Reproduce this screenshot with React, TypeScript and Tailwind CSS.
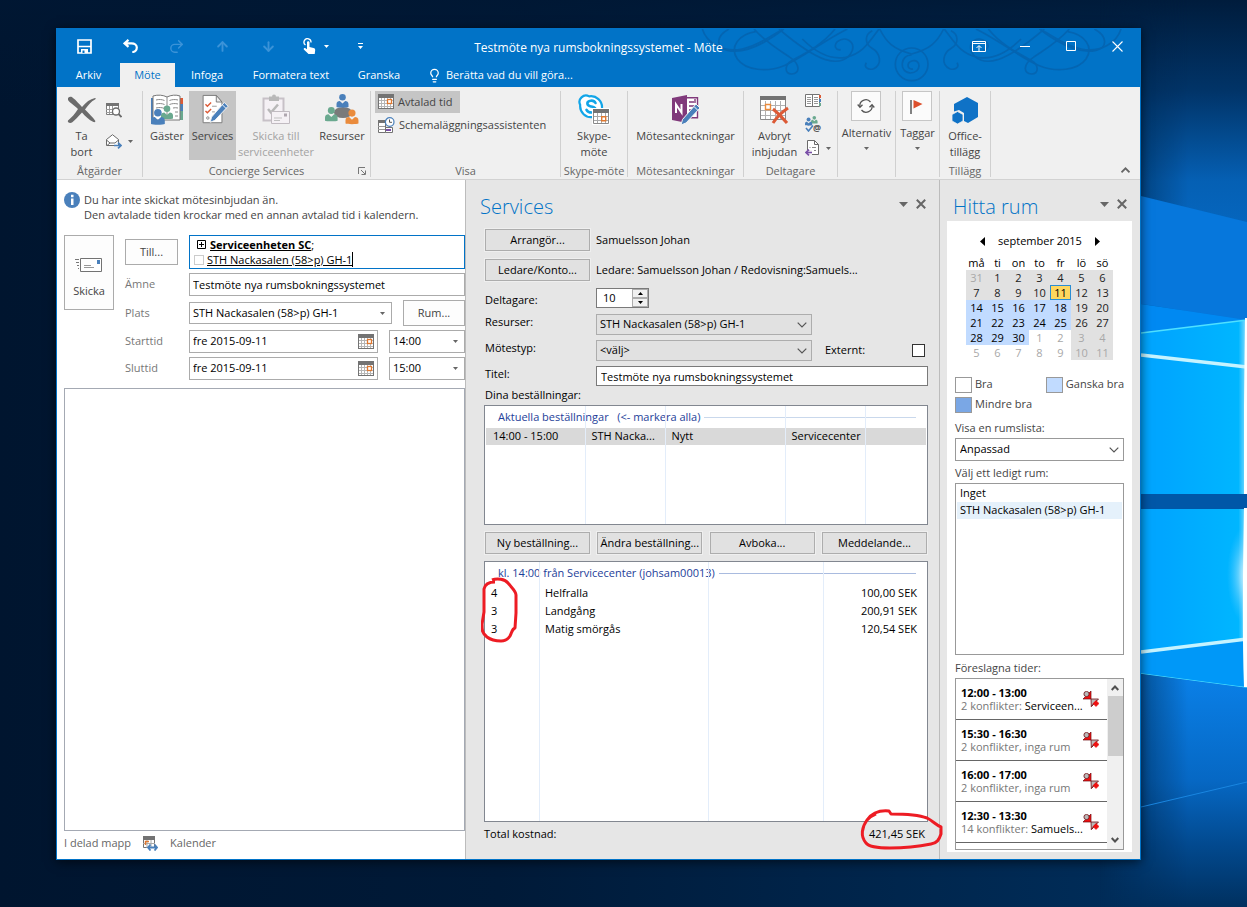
import type { ReactNode } from "react";
import { Redo2, ArrowUp, ArrowDown, Lightbulb } from "lucide-react";

/* ---------- shared glyphs ---------- */

const Caret = ({ className = "text-[#666]" }: { className?: string }) => (
  <svg className={className} width="5" height="3" viewBox="0 0 5 3" fill="currentColor">
    <path d="M0 0h5L2.5 3z" />
  </svg>
);

const Chevron = () => (
  <svg width="10" height="6" viewBox="0 0 10 6" fill="none" stroke="#555" strokeWidth="1.2">
    <path d="M.7.7 5 5 9.3.7" />
  </svg>
);

const SmallCalendar = ({ size = 16 }: { size?: number }) => (
  <svg width={size} height={size} viewBox="0 0 16 16">
    <rect x=".5" y=".5" width="15" height="14" fill="#fff" stroke="#737373" />
    <path d="M3.5 4v10M6.5 4v10M9.5 4v10M12.5 4v10M1 6.5h14M1 9.5h14M1 12.5h14" stroke="#b5b5b5" />
    <path d="M0 0h16v4H0z" fill="#737373" />
    <rect x="9.5" y="5.5" width="4" height="4" fill="#fff" stroke="#e0782f" strokeWidth="1.3" />
  </svg>
);

const Person = ({ x, y, color, s = 1 }: { x: number; y: number; color: string; s?: number }) => (
  <g transform={`translate(${x} ${y}) scale(${s})`} fill={color}>
    <circle cx="6" cy="3.3" r="3.3" />
    <path d="M0 13V10c0-2 1.500-3 3.300-3L6 9.500 8.700 7c1.800 0 3.300 1 3.300 3v3c-1 .8-11 .8-12 0z" />
  </g>
);

const Pencil = ({ color = "#4a80bb" }: { color?: string }) => (
  <g>
    <path d="m29 6 4 4-14 15-5 2 1.500-5.500z" fill={color} stroke="#f5f5f5" strokeWidth="1" />
    <path d="m27 8.500 4 4" stroke="#fff" strokeWidth="1" />
  </g>
);

/* ---------- ribbon icons ---------- */

const DeleteIcon = () => (
  <svg width="30" height="28" viewBox="0 0 30 28">
    <path
      d="M1 2c2-2 4-1 5 0 3 2 6 6 9 9C19 6 23 3 28 2c1 0 1 1 0 1.500-4 2-7 6-10 10 4 4 8 8 10 11 1 1 0 2-1.500 1.500C22 24 18 20 15 16.500 11 21 8 24 5 26.500c-2 1-5 0-4-2C4 22 8 18 11 13 7 9 2 6 1 4z"
      fill="#6b6b6b"
    />
  </svg>
);

const CalendarSearchIcon = () => (
  <svg width="16" height="15" viewBox="0 0 16 15">
    <path d="M.5 1.500h12v10H.5z" fill="#fff" stroke="#7d7d7d" />
    <path d="M3.500 3v8M6.500 3v8M0 6.500h12M0 9.500h9" stroke="#9a9a9a" />
    <path d="M0 0h13v3H0z" fill="#737373" />
    <circle cx="10" cy="8.500" r="3.500" fill="#fff" stroke="#6b6b6b" strokeWidth="1.300" />
    <path d="m12.500 11 3 3" stroke="#6b6b6b" strokeWidth="1.800" />
  </svg>
);

const ForwardMailIcon = () => (
  <svg width="16" height="15" viewBox="0 0 16 15" fill="none">
    <path d="M.5 5.500 6.500.7l6 4.800v6H.5z" fill="#fff" stroke="#6b6b6b" />
    <path d="m.5 6 3.500 3h5l3.500-3M1 11.500l3-2.500" stroke="#6b6b6b" />
    <path d="M8 11.500h6M12 8.700l3 2.800-3 2.800" stroke="#4a80bb" strokeWidth="1.700" />
  </svg>
);

const GuestsIcon = () => (
  <svg width="32" height="32" viewBox="0 0 32 32">
    <path d="M0 4h32v22H0z" fill="#4a80bb" />
    <path d="M29 4h3v6h-3z" fill="#dc5a36" />
    <path d="M29 17h3v9h-3z" fill="#6aa98f" />
    <path d="M2 2c5-1.500 10-1 14 1 4-2 9-2.500 13-1v24H2z" fill="#fff" stroke="#777" />
    <path d="M16 3v22M5 6c3-.8 6-.6 8.500.5M5 10c3-.8 6-.6 8.500.5M5 14c3-.8 6-.6 8.500.5M18.500 6.500C21 5.500 24 5.200 27 6M18.500 10.500C21 9.500 24 9.200 27 10M22 14c2-.4 3-.4 5 0M24 18h3M24 22h3" fill="none" stroke="#8a8a8a" />
    <Person x={10} y={11.500} color="#6aa98f" />
    <Person x={0} y={15} color="#4a80bb" s={1.150} />
  </svg>
);

const ServicesIcon = () => (
  <svg width="32" height="32" viewBox="0 0 34 32">
    <path d="M6.500.5h14l6 7v22h-20z" fill="#fff" stroke="#777" />
    <path d="M20.500.5v7h6z" fill="#eee" stroke="#777" />
    <g fill="none" stroke="#dc5a36" strokeWidth="1.500">
      <path d="m9 10 2 2 4-4M9 17l2 2 4-4" />
    </g>
    <circle cx="11.500" cy="24.500" r="1.300" fill="none" stroke="#888" />
    <path d="M16 12h5M16 18h3" stroke="#999" />
    <g transform="translate(0 2)">
      <Pencil />
    </g>
  </svg>
);

const SendUnitsIcon = () => (
  <svg width="32" height="32" viewBox="0 0 32 32" opacity=".9">
    <path d="M3.500 4.500h20v22h-20z" fill="#f6f2f6" stroke="#c3bcc3" strokeWidth="2" />
    <path d="M9 2.500h3a2 2 0 0 1 4 0h3V7H9z" fill="#b3b3b3" />
    <path d="m8 15 3 3.500 7-8" fill="none" stroke="#b3b3b3" strokeWidth="2.500" />
    <path d="M11.500 17.500h18v12h-18z" fill="#f6f2f6" stroke="#bdb6bd" />
    <path d="M24 19.500h3v3h-3z" fill="#a8a0a8" />
    <path d="M14 24h8M14 26.500h6" stroke="#bbb" />
  </svg>
);

const ResourcesIcon = () => (
  <svg width="34" height="32" viewBox="0 0 34 32">
    <ellipse cx="18" cy="18.500" rx="9" ry="5.500" fill="#7a7a7a" />
    <Person x={11.500} y={0} color="#4a80bb" />
    <Person x={0} y={13} color="#6aa98f" s={1.050} />
    <Person x={20.500} y={15.500} color="#ea8b3c" s={1.080} />
  </svg>
);

const ScheduleIcon = () => (
  <svg width="17" height="17" viewBox="0 0 17 17">
    <path d="M.5 3.500h7v12h-7z" fill="#fff" stroke="#737373" />
    <path d="M0 3h7v3H0z" fill="#737373" />
    <path d="M0 9.500h7M0 12.500h7" stroke="#999" />
    <path d="M7.500 10.500h7v5h-7z" fill="#fff" stroke="#737373" />
    <path d="M8 12h5v2H8z" fill="#7a4fa8" />
    <circle cx="11.700" cy="5" r="4.300" fill="#fff" stroke="#4a80bb" strokeWidth="1.200" />
    <path d="M11.500 2.500V5.300H14" fill="none" stroke="#555" />
  </svg>
);

const SkypeIcon = () => (
  <svg width="32" height="32" viewBox="0 0 32 32">
    <path d="M2.200 11a6.500 6.500 0 0 1 9-8.600A11 11 0 0 1 24 14a6.500 6.500 0 0 1-9 9A11 11 0 0 1 2.200 11z" fill="#fff" stroke="#12a5e8" strokeWidth="2.200" />
    <path d="M17.500 9c-1-2-3-2.500-4.800-2.300-4.500.5-4.200 4.500-.5 5.500 3 .8 6 1 5.600 4-.5 3.200-7.500 3.200-9.300-.4" fill="none" stroke="#12a5e8" strokeWidth="2.600" strokeLinecap="round" />
    <path d="M14.500 14.500h17v16h-17z" fill="#fff" stroke="#fff" />
    <path d="M15.500 15.500h15v14h-15z" fill="#fff" stroke="#8a8a8a" />
    <path d="M19.500 19v10M23.500 19v10M27.500 19v10M16 22.500h14M16 26.500h14" stroke="#a9a9a9" />
    <path d="M15 15h16v4H15z" fill="#737373" />
    <path d="M23.700 22.700h4v4h-4z" fill="#fff" stroke="#e0782f" strokeWidth="1.400" />
  </svg>
);

const OneNoteIcon = () => (
  <svg width="30" height="32" viewBox="0 0 30 32">
    <path d="M14 3.700h12.500v20H14z" fill="#fff" stroke="#80397b" strokeWidth="1.400" />
    <path d="M18 8h5M18 12h5M18 16h5M24 5v4M24 11v4" stroke="#80397b" strokeWidth="1.400" />
    <path d="M1 4 16 1v28L1 26z" fill="#80397b" />
    <path d="M5 19v-8.500l5.500 8V10" fill="none" stroke="#fff" strokeWidth="2" />
    <g transform="translate(-4 4)">
      <Pencil />
    </g>
  </svg>
);

const CancelInviteIcon = () => (
  <svg width="30" height="30" viewBox="0 0 30 30">
    <path d="M.5 2.500h25v22H.5z" fill="#fff" stroke="#8a8a8a" />
    <path d="M5.500 6v18M10.500 6v18M15.500 6v18M20.500 6v18M1 10.500h24M1 15.500h24M1 20.500h24" stroke="#b0b0b0" />
    <path d="M0 1h26v4H0z" fill="#737373" />
    <path d="M5.500 9.500h5v5h-5z" fill="#fff" stroke="#ea8b3c" strokeWidth="1.400" />
    <path d="M13 14c5 4 9 8 14 14M28 13c-6 4-11 9-15 15" stroke="#dc5a36" strokeWidth="3" fill="none" />
  </svg>
);

const BookIcon = () => (
  <svg width="16" height="14" viewBox="0 0 16 14">
    <path d="M.5.5h14v12H.5z" fill="#fff" stroke="#737373" />
    <path d="M7.500 0v13" stroke="#777" />
    <path d="M2 3.500h4M2 5.500h4M2 7.500h4M2 9.500h4M9 3.500h4M9 5.500h4M9 7.500h4M9 9.500h4" stroke="#999" />
    <path d="M14 1h2v3h-2z" fill="#dc5a36" />
    <path d="M14 5h2v3h-2z" fill="#4a80bb" />
    <path d="M14 9h2v3h-2z" fill="#6aa98f" />
  </svg>
);

const CheckNamesIcon = () => (
  <svg width="17" height="16" viewBox="0 0 17 16">
    <Person x={6} y={0} color="#6aa98f" s={0.550} />
    <Person x={0} y={1.500} color="#4a80bb" s={0.600} />
    <path d="m1 12 2.500 3L8 9.500" fill="none" stroke="#4a80bb" strokeWidth="1.600" />
    <text x="8" y="14.500" className="font-['Open_Sans'] text-[9px] font-bold" fill="#555">@</text>
  </svg>
);

const ResponseIcon = () => (
  <svg width="15" height="16" viewBox="0 0 15 16" fill="none">
    <path d="M2.500.5h7l4 4v10h-11z" fill="#fff" stroke="#6b6b6b" />
    <path d="M9.500.5v4h4" stroke="#6b6b6b" />
    <path d="M7 7.500h4M9 10.500h2M4.500 7.500h1" stroke="#888" />
    <path d="M0 10h7v5H0z" fill="#f0f0f0" />
    <path d="M1 12.500h6M4 9.700l-3 2.800 3 2.800" stroke="#7a4fa8" strokeWidth="1.700" />
  </svg>
);

const RecurIcon = () => (
  <svg width="18" height="16" viewBox="0 0 18 16" fill="none" stroke="#555" strokeWidth="1.300">
    <path d="M3 9a6 6 0 0 1 10.500-5M15 7a6 6 0 0 1-10.500 5" />
    <path d="M.7 6.500 3 9.300l2.500-2.500M17.300 9.500 15 6.700l-2.500 2.500" />
  </svg>
);

const FlagIcon = () => (
  <svg width="14" height="15" viewBox="0 0 14 15">
    <path d="M1 1v14" stroke="#6b6b6b" strokeWidth="1.700" />
    <path d="M3.500 1 12.500 5l-9 4.500z" fill="#dc4f2c" />
  </svg>
);

const AddinIcon = () => (
  <svg width="28" height="28" viewBox="0 0 28 28" fill="#0f72c6">
    <path d="m16 1 11 6v14l-10 6-4-2v-8L8 14 3 15.500V8z" />
    <path d="m6.500 15.500 5.500 3V25l-5.500 3L1 25v-6.500z" stroke="#f0f0f0" strokeWidth=".8" />
  </svg>
);

const ConflictIcon = () => (
  <svg width="16" height="16" viewBox="0 0 16 16">
    <path d="M8 0v8H0l2.500-2.500z" fill="#ef1010" stroke="#6f0d12" strokeWidth=".7" />
    <circle cx="3.500" cy="3" r="2.600" fill="#b9b9b9" stroke="#6f0d12" strokeWidth=".8" />
    <path d="M8 8h7.500L8.300 15.500z" fill="#b9b9b9" stroke="#6f0d12" strokeWidth=".8" />
    <path d="M8.500 15.500 12 11l2-1.500" fill="none" stroke="#6f0d12" strokeWidth="1" />
    <path d="M13 9.500 16 12.500 13 15.500 10 12.500z" fill="#ef1010" stroke="#ef1010" strokeWidth=".6" strokeLinejoin="round" />
  </svg>
);

/* ---------- decoration ---------- */

const SwirlHalf = () => (
  <g>
    <path d="M270 0c-38 20-42 55-5 64 35 8 80-6 120-30 25-15 40-25 48-34" />
    <path d="M190 0c12 40 60 72 120 60 55-12 90-45 125-60" />
    <path d="M350 8c-50 8-80 45-55 82 25 35 90 40 140 20 60-25 110-70 190-110" />
    <path d="M345 0c40 45 80 65 108 85 30 20 32 48 5 50-22 0-22-28 0-40 40-22 95-50 130-95" />
    <path d="M420 0c35 30 90 75 140 92 40 12 70 0 80-28 8-28-22-44-45-26-12 12-5 27 10 24" />
    <path d="M490 30c50 50 90 62 130 55 50-10 70-45 100-85" />
    <path d="M700 5c-25 12-22 40-2 52 28 16 32 50 6 62-18 6-30-6-22-18" />
    <path d="M722 0c20 40 40 60 96 75" />
  </g>
);

const Swirls = () => (
  <svg
    className="pointer-events-none absolute top-0 right-0"
    width="451"
    height="59"
    viewBox="150 0 1353 177"
    fill="none"
    stroke="#0465b2"
    strokeWidth="5"
  >
    <SwirlHalf />
    <g transform="translate(1636 0) scale(-1 1)">
      <SwirlHalf />
    </g>
    <circle cx="818" cy="106" r="49" />
    <path d="M818 78c-34-2-40 52-4 54 34 0 34-44 4-36-16 6-14 26 4 24" />
  </svg>
);

const Wallpaper = () => (
  <div className="absolute inset-0 overflow-hidden bg-[linear-gradient(180deg,#001733cc_0%,#00173300_12%),linear-gradient(90deg,#00152f_0%,#001a38_40%,#00274f_75%,#00305f_100%)]">
    <svg className="absolute top-0 right-0 h-full" width="147" viewBox="0 0 147 907" preserveAspectRatio="none">
      <defs>
        <linearGradient id="sky" x1="0" y1="0" x2="0" y2="1">
          <stop offset="0" stopColor="#001c3c" />
          <stop offset=".1" stopColor="#013468" />
          <stop offset=".2" stopColor="#0560b4" />
          <stop offset=".35" stopColor="#0672d2" />
          <stop offset=".75" stopColor="#0a7fe6" />
          <stop offset=".86" stopColor="#0668c4" />
          <stop offset=".93" stopColor="#024a90" />
          <stop offset="1" stopColor="#00305f" />
        </linearGradient>
        <linearGradient id="fade" x1="0" y1="0" x2="1" y2="0">
          <stop offset="0" stopColor="#000" />
          <stop offset=".6" stopColor="#fff" />
        </linearGradient>
        <mask id="fadeIn">
          <path d="M0 0h147v907H0z" fill="url(#fade)" />
        </mask>
        <linearGradient id="pane" x1="0" y1="0" x2="1" y2="0">
          <stop offset=".2" stopColor="#00a6ff" />
          <stop offset=".92" stopColor="#00b6ff" />
          <stop offset="1" stopColor="#8fe0ff" />
        </linearGradient>
        <radialGradient id="glow">
          <stop offset="0" stopColor="#e8f9ff" />
          <stop offset="1" stopColor="#59cbff" stopOpacity="0" />
        </radialGradient>
      </defs>
      <g mask="url(#fadeIn)">
        <path d="M0 0h147v907H0z" fill="url(#sky)" />
      </g>
      <path d="M41 196 147 222v98L41 304z" fill="#0677dc" />
      <path d="M41 304 147 320v50l-106-12z" fill="#0089f2" />
      <path d="M41 333 147 320v174H41z" fill="url(#pane)" />
      <path d="M41 333 147 320M41 673l106 14" stroke="#4fe0ff" strokeWidth="1.500" />
      <path d="M0 494h147v15H0z" fill="#0057a8" />
      <path d="M41 509h106v178L41 673z" fill="url(#pane)" />
      <path d="M41 652v21l106 14v-48z" fill="#0098f8" />
      <path d="m41 355 106 12M41 652l106-13" stroke="#c5f3ff" strokeWidth="3.500" />
      <ellipse cx="147" cy="575" rx="20" ry="50" fill="url(#glow)" />
      <path d="M147 318h-2l-1 88v88h3zM147 508h-3c-1 60-2 120 0 179h3z" fill="#fff" />
      <path d="M41 807 147 782" stroke="#1a86e0" strokeWidth="1" />
    </svg>
  </div>
);

/* ---------- ribbon ---------- */

const Group = ({ label, className, children, corner }: { label?: string; className: string; children: ReactNode; corner?: boolean }) => (
  <section className={`relative mt-1 mb-0.5 flex shrink-0 flex-col border-r border-[#d0d0d0] ${className}`}>
    <div className="flex flex-1 justify-center">{children}</div>
    <div className="h-3 text-center leading-3 whitespace-nowrap text-[#666]">{label}</div>
    {corner && (
      <button aria-label="Dialogruta" className="absolute right-1 bottom-0.5">
        <svg width="8" height="8" viewBox="0 0 8 8" fill="none" stroke="#777">
          <path d="M.5 7V.5H7M3 3l4 4M7.500 3.500v4h-4" />
        </svg>
      </button>
    )}
  </section>
);

const BigButton = ({ icon, lines, className = "", on, off }: { icon: ReactNode; lines: string[]; className?: string; on?: boolean; off?: boolean }) => (
  <button
    className={`flex h-[69px] flex-col items-center whitespace-nowrap ${on ? "bg-[#c5c5c5]" : ""} ${off ? "text-[#a3a3a3]" : "text-[#444]"} ${className}`}
  >
    <span className="flex h-[37px] items-center justify-center">{icon}</span>
    {lines.map((l) => (
      <span key={l} className="leading-4">{l}</span>
    ))}
  </button>
);

const BoxButton = ({ icon, label }: { icon: ReactNode; label: string }) => (
  <button className="flex flex-col items-center text-[#444]">
    <span className="flex size-[30px] items-center justify-center border border-[#c6c6c6] bg-[#fbfbfb]">{icon}</span>
    <span className="mt-1 mb-1.5 leading-4">{label}</span>
    <Caret />
  </button>
);

const Ribbon = () => (
  <div className="flex h-[93px] border-b border-[#d2d2d2] bg-[#f0f0f0] text-[11px]">
    <Group label="Åtgärder" className="w-[86px]">
      <BigButton icon={<DeleteIcon />} lines={["Ta", "bort"]} className="w-[49px]" />
      <div className="flex w-[36px] flex-col items-start gap-4 pt-3">
        <button aria-label="Kalender"><CalendarSearchIcon /></button>
        <button aria-label="Vidarebefordra" className="flex items-center gap-1.5"><ForwardMailIcon /><Caret /></button>
      </div>
    </Group>
    <Group label="Concierge Services" className="w-[228px]" corner>
      <BigButton icon={<GuestsIcon />} lines={["Gäster"]} className="w-11" />
      <BigButton icon={<ServicesIcon />} lines={["Services"]} className="w-[47px]" on />
      <BigButton icon={<SendUnitsIcon />} lines={["Skicka till", "serviceenheter"]} className="w-20" off />
      <BigButton icon={<ResourcesIcon />} lines={["Resurser"]} className="w-[52px]" />
    </Group>
    <Group label="Visa" className="w-[190px]">
      <div className="flex w-full flex-col items-start pl-1 text-[#444]">
        <button className="flex h-[22px] items-center gap-1 bg-[#c5c5c5] pr-2 pl-[3px]"><SmallCalendar />Avtalad tid</button>
        <button className="flex h-6 items-center gap-1 pl-[3px]"><ScheduleIcon />Schemaläggningsassistenten</button>
      </div>
    </Group>
    <Group label="Skype-möte" className="w-[67px]">
      <BigButton icon={<SkypeIcon />} lines={["Skype-", "möte"]} />
    </Group>
    <Group label="Mötesanteckningar" className="w-[116px]">
      <BigButton icon={<OneNoteIcon />} lines={["Mötesanteckningar"]} />
    </Group>
    <Group label="Deltagare" className="w-[94px]">
      <BigButton icon={<CancelInviteIcon />} lines={["Avbryt", "inbjudan"]} className="w-[52px]" />
      <div className="flex w-8 flex-col items-start gap-2 pt-[3px] pl-1">
        <button aria-label="Adressbok"><BookIcon /></button>
        <button aria-label="Kontrollera namn"><CheckNamesIcon /></button>
        <button aria-label="Svarsalternativ" className="flex items-center gap-1.5"><ResponseIcon /><Caret /></button>
      </div>
    </Group>
    <Group className="w-[58px]"><BoxButton icon={<RecurIcon />} label="Alternativ" /></Group>
    <Group className="w-[44px]"><BoxButton icon={<FlagIcon />} label="Taggar" /></Group>
    <Group label="Tillägg" className="w-[51px]">
      <BigButton icon={<AddinIcon />} lines={["Office-", "tillägg"]} />
    </Group>
    <button aria-label="Dölj menyfliksområdet" className="mr-2.5 mb-1.5 ml-auto self-end">
      <svg width="9" height="6" viewBox="0 0 9 6" fill="none" stroke="#666" strokeWidth="1.800"><path d="M.5 5.300 4.500 1.300l4 4" /></svg>
    </button>
  </div>
);

/* ---------- title bar ---------- */

const barButton = "flex h-8 w-[46px] items-center justify-center";

const TitleBar = () => (
  <header className="relative bg-[#0173c7] text-[11px] text-white">
    <Swirls />
    <div className="relative grid h-[34px] grid-cols-[1fr_auto_1fr] items-center">
      <div className="flex pl-1">
        <button aria-label="Spara" className={barButton}>
          <svg width="15" height="15" viewBox="0 0 15 15"><path d="M1 1h13v13H1z" fill="none" stroke="#fff" strokeWidth="1.700" /><path d="M1 7.500h13" stroke="#fff" strokeWidth="1.500" /><path d="M4 10h7v4H4z" fill="#fff" /><path d="M5.500 11.500h2V14h-2z" fill="#0173c7" /></svg>
        </button>
        <button aria-label="Ångra" className={barButton}>
          <svg width="15" height="14" viewBox="0 0 15 14" fill="none" stroke="#fff" strokeWidth="2.200"><path d="M5.500.8 1.500 4.300l4 3.500M2 4.300h6.500c3.300 0 5.300 1.800 5.300 4.200 0 2.600-1.800 4.500-4.500 4.500" /></svg>
        </button>
        <button aria-label="Gör om" className={`${barButton} text-[#3b93d8]`}><Redo2 size={17} strokeWidth={2} /></button>
        <button aria-label="Föregående" className={`${barButton} text-[#3b93d8]`}><ArrowUp size={15} strokeWidth={3} /></button>
        <button aria-label="Nästa" className={`${barButton} text-[#3b93d8]`}><ArrowDown size={15} strokeWidth={3} /></button>
        <button aria-label="Pekläge" className={`${barButton} gap-2 pl-1`}>
          <svg width="13" height="17" viewBox="0 0 13 17" fill="none"><path d="M2.500 7A3.500 3.500 0 1 1 8 4.500" stroke="#fff" strokeWidth="1.300" /><path d="M4 4.500c0-1.600 2.500-1.600 2.500 0V9l4 1c1.300.3 1.800 1 1.700 2.200L11.700 16H5.500L.8 11.500C.3 10.500 1.500 9.700 2.500 10.300L4 11.300z" fill="#fff" /></svg>
          <Caret className="text-white" />
        </button>
        <button aria-label="Anpassa" className={barButton}>
          <svg width="5" height="6" viewBox="0 0 5 6" fill="#fff"><path d="M0 0h5v1H0zM0 3h5L2.500 6z" /></svg>
        </button>
      </div>
      <h1 className="pt-1 text-xs">Testmöte nya rumsbokningssystemet - Möte</h1>
      <div className="flex justify-end">
        <button aria-label="Menyfliksalternativ" className={barButton}>
          <svg width="14" height="11" viewBox="0 0 14 11" fill="none" stroke="#fff"><path d="M.5.5h13v10H.5zM0 2.500h14M7 10V5M4.500 7 7 4.500 9.500 7" /></svg>
        </button>
        <button aria-label="Minimera" className={barButton}><svg width="10" height="1"><path d="M0 0h10v1H0z" fill="#fff" /></svg></button>
        <button aria-label="Maximera" className={barButton}><svg width="10" height="10"><path d="M.5.5h9v9h-9z" fill="none" stroke="#fff" /></svg></button>
        <button aria-label="Stäng" className={barButton}><svg width="11" height="11" viewBox="0 0 11 11"><path d="m.5.5 10 10M10.500.5l-10 10" stroke="#fff" strokeWidth="1.100" /></svg></button>
      </div>
    </div>
    <nav className="relative flex h-6 items-stretch">
      <button className="w-[63px]">Arkiv</button>
      <button className="w-[55px] bg-[#f0f0f0] text-[#0173c7]">Möte</button>
      <button className="w-16">Infoga</button>
      <button className="w-[104px]">Formatera text</button>
      <button className="w-[72px]">Granska</button>
      <button className="flex items-center gap-1 pl-3"><Lightbulb size={15} strokeWidth={2} />Berätta vad du vill göra...</button>
    </nav>
  </header>
);

/* ---------- invitation form ---------- */

const outlined = "border border-[#ababab] bg-[#fdfdfd] text-[#444]";
const fieldBox = "border border-[#ababab] bg-white";

const FormRow = ({ label, htmlFor, children, className }: { label: string; htmlFor: string; children: ReactNode; className: string }) => (
  <div className={`flex items-center ${className}`}>
    <label htmlFor={htmlFor} className="w-16 text-[#777]">{label}</label>
    {children}
  </div>
);

const DateRow = ({ id, label, time }: { id: string; label: string; time: string }) => (
  <FormRow label={label} htmlFor={id} className="h-[23px]">
    <div className={`flex h-full flex-1 items-center ${fieldBox}`}>
      <input id={id} defaultValue="fre 2015-09-11" className="w-full min-w-0 flex-1 px-[3px] text-black outline-none" />
      <button aria-label="Välj datum" className="mr-[3px]"><SmallCalendar /></button>
    </div>
    <div className={`relative ml-[11px] h-full w-[76px] ${fieldBox}`}>
      <select aria-label={`${label} klockslag`} defaultValue={time} className="h-full w-full appearance-none px-[3px] text-black outline-none"><option>{time}</option></select>
      <span className="pointer-events-none absolute inset-y-0 right-1.5 flex items-center"><Caret /></span>
    </div>
  </FormRow>
);

const InvitationForm = () => (
  <main className="flex min-w-0 flex-1 flex-col bg-white pl-[7px] text-[11px]">
    <div className="mt-3 flex gap-1 leading-[15px] text-[#444]">
      <svg width="16" height="16" viewBox="0 0 16 16"><circle cx="8" cy="8" r="8" fill="#4a80bb" /><path d="M7 6.500h2.500V13H7zM7 2.800h2.500v2.400H7z" fill="#fff" /></svg>
      <p>Du har inte skickat mötesinbjudan än.<br />Den avtalade tiden krockar med en annan avtalad tid i kalendern.</p>
    </div>
    <div className="mt-[13px] flex items-start">
      <button className={`flex h-[75px] w-[50px] flex-col items-center justify-center gap-2.5 pt-3 ${outlined}`}>
        <svg width="28" height="15" viewBox="0 0 28 15" fill="none"><path d="M5.500.5h21v13h-21z" fill="#fff" stroke="#737373" /><path d="M22 2h3v4h-3z" fill="#4a80bb" /><path d="M9 7.500h7M9 9.500h10" stroke="#999" /><path d="M0 1.500h4M1 4.500h3M2 7.500h2M3 10.500h1" stroke="#777" /></svg>
        Skicka
      </button>
      <div className="ml-[11px] flex min-w-0 flex-1 flex-col gap-1">
        <div className="flex h-[34px] items-center">
          <button className={`mr-[11px] h-[26px] w-[53px] ${outlined}`}>Till...</button>
          <div className="flex h-full flex-1 flex-col justify-center border border-[#0173c7] bg-white leading-[15px] text-black">
            <div className="flex items-center gap-1 pl-[7px]">
              <svg width="9" height="9" viewBox="0 0 9 9" fill="none" stroke="#000"><path d="M.5.5h8v8h-8zM2 4.500h5M4.500 2v5" /></svg>
              <span><b className="underline">Serviceenheten SC</b>;</span>
            </div>
            <div className="flex items-center gap-[3px] pl-1">
              <span className="size-[10px] border border-[#ccc]" />
              <span className="border-r border-black underline">STH Nackasalen (58&gt;p) GH-1</span>
            </div>
          </div>
        </div>
        <FormRow label="Ämne" htmlFor="subject" className="h-[23px]">
          <input id="subject" defaultValue="Testmöte nya rumsbokningssystemet" className={`h-full min-w-0 flex-1 px-[3px] text-black outline-none ${fieldBox}`} />
        </FormRow>
        <FormRow label="Plats" htmlFor="place" className="h-[26px]">
          <div className={`relative h-[22px] flex-1 ${fieldBox}`}>
            <select id="place" className="h-full w-full appearance-none px-[3px] text-black outline-none"><option>STH Nackasalen (58&gt;p) GH-1</option></select>
            <span className="pointer-events-none absolute inset-y-0 right-1.5 flex items-center"><Caret /></span>
          </div>
          <button className={`ml-[11px] h-full w-[62px] ${outlined}`}>Rum...</button>
        </FormRow>
        <DateRow id="start" label="Starttid" time="14:00" />
        <DateRow id="end" label="Sluttid" time="15:00" />
      </div>
    </div>
    <textarea aria-label="Meddelande" className="mt-2 flex-1 resize-none border border-[#a4a9b3] outline-none" />
    <footer className="flex h-7 items-center pb-1 text-[#666]">
      <span>I delad mapp</span>
      <svg className="ml-3" width="15" height="15" viewBox="0 0 15 15" fill="none"><path d="M.5.5h11v11H.5z" fill="#fff" stroke="#737373" /><path d="M0 0h12v4H0z" fill="#737373" /><path d="M0 7.500h12M4 4v8M8 4v8" stroke="#aaa" /><path d="M2.500 9V5.500H6" stroke="#e0782f" strokeWidth="1.400" /><path d="M5 11.500h9M7.500 8.500 5 11.500l2.500 3M11.500 8.500l2.500 3-2.500 3" stroke="#4a80bb" strokeWidth="1.800" /></svg>
      <span className="ml-3">Kalender</span>
    </footer>
  </main>
);

/* ---------- services pane ---------- */

const PaneHeading = ({ title, className = "" }: { title: string; className?: string }) => (
  <div className={`flex items-center ${className}`}>
    <h2 className="flex-1 font-['Open_Sans'] text-xl leading-6 font-light text-[#0173c7]">{title}</h2>
    <button aria-label="Alternativ" className="mb-1.5 pr-2"><svg width="9" height="5" viewBox="0 0 9 5" fill="#666"><path d="M0 0h9L4.500 5z" /></svg></button>
    <button aria-label="Stäng" className="mb-1.5"><svg width="10" height="10" viewBox="0 0 10 10" stroke="#666" strokeWidth="2"><path d="m.8.8 8.400 8.400M9.200.8.8 9.200" /></svg></button>
  </div>
);

const grey = "h-[22px] w-[105px] border border-[#adadad] bg-[#e1e1e1] outline outline-[#efefef]";

const GreySelect = ({ id, value }: { id: string; value: string }) => (
  <div className="relative h-[21px] w-[216px] border border-[#adadad] bg-[#e1e1e1]">
    <select id={id} className="h-full w-full appearance-none px-[3px] outline-none"><option>{value}</option></select>
    <span className="pointer-events-none absolute inset-y-0 right-1 flex items-center"><Chevron /></span>
  </div>
);

const ColumnLines = ({ widths }: { widths: string[] }) => (
  <div className="pointer-events-none absolute inset-0 flex">
    {widths.map((w, i) => (
      <span key={i} className={`border-r border-[#e3edfa] ${w}`} />
    ))}
  </div>
);

const items = [
  ["4", "Helfralla", "100,00 SEK"],
  ["3", "Landgång", "200,91 SEK"],
  ["3", "Matig smörgås", "120,54 SEK"],
];

const formLabel = "w-[112px] self-start pl-px";

const ServicesPane = () => (
  <aside className="flex w-[475px] shrink-0 flex-col border-x border-[#bcbcbc] bg-[#e6e6e6] pr-[11px] pl-[18px] font-['Open_Sans'] text-[11px] text-black">
    <PaneHeading title="Services" className="-ml-1 mt-[15px] h-6 pr-0.5" />
    <div className="mt-[10px] flex items-center gap-1.5 pl-px"><button className={grey}>Arrangör...</button><span>Samuelsson Johan</span></div>
    <div className="mt-2 flex items-center gap-1.5 pl-px"><button className={grey}>Ledare/Konto...</button><span>Ledare: Samuelsson Johan / Redovisning:Samuels...</span></div>
    <div className="mt-[7px] flex h-5 items-center">
      <label htmlFor="count" className={`${formLabel} pt-1`}>Deltagare:</label>
      <div className="flex h-full w-[53px] border border-[#7a7a7a] bg-white">
        <input id="count" defaultValue="10" className="w-full min-w-0 flex-1 pl-1.5 outline-none" />
        <div className="flex w-4 flex-col bg-[#f0f0f0]">
          <button aria-label="Öka" className="flex flex-1 items-center justify-center border border-[#adadad]"><svg width="5" height="3" viewBox="0 0 5 3"><path d="M0 3h5L2.500 0z" /></svg></button>
          <button aria-label="Minska" className="flex flex-1 items-center justify-center border border-[#adadad]"><Caret className="text-black" /></button>
        </div>
      </div>
    </div>
    <div className="mt-1.5 flex items-center"><label htmlFor="resource" className={formLabel}>Resurser:</label><GreySelect id="resource" value="STH Nackasalen (58>p) GH-1" /></div>
    <div className="mt-[5px] flex items-center">
      <label htmlFor="type" className={formLabel}>Mötestyp:</label>
      <GreySelect id="type" value="<välj>" />
      <label htmlFor="external" className="ml-[13px]">Externt:</label>
      <input id="external" type="checkbox" className="mr-[3px] ml-auto size-[13px] appearance-none border border-[#333] bg-white" />
    </div>
    <div className="mt-[5px] flex items-center">
      <label htmlFor="title" className={formLabel}>Titel:</label>
      <input id="title" defaultValue="Testmöte nya rumsbokningssystemet" className="h-5 min-w-0 flex-1 border border-[#7a7a7a] bg-white px-1 outline-none" />
    </div>
    <h3 className="mb-0.5 pl-px leading-[17px]">Dina beställningar:</h3>

    <div className="relative h-[120px] border border-[#828790] bg-white">
      <div className="flex h-[22px] items-center gap-1 pr-[11px] pl-[13px] text-[#1d3e99]">
        <span className="whitespace-pre">Aktuella beställningar   (&lt;- markera alla)</span>
        <span className="h-px flex-1 bg-[#c9d8ec]" />
      </div>
      <table className="w-full table-fixed">
        <tbody>
          <tr className="h-[17px] border-x border-white bg-[#d9d9d9]">
            <td className="w-[100px] pl-[7px]">14:00 - 15:00</td>
            <td className="w-20 pl-1.5">STH Nacka...</td>
            <td className="w-[120px] pl-1.5">Nytt</td>
            <td className="w-20 pl-1.5">Servicecenter</td>
            <td />
          </tr>
        </tbody>
      </table>
      <ColumnLines widths={["w-[101px]", "w-20", "w-[120px]", "w-20"]} />
    </div>

    <div className="mt-[7px] mb-[7px] flex justify-between px-px">
      <button className={grey}>Ny beställning...</button>
      <button className={grey}>Ändra beställning...</button>
      <button className={grey}>Avboka...</button>
      <button className={grey}>Meddelande...</button>
    </div>

    <div className="relative flex-1 border border-[#828790] bg-white">
      <div className="flex h-[22px] items-center gap-1 pr-[11px] pl-[13px] text-[#1d3e99]">
        <span>kl. 14:00 från Servicecenter (johsam00013)</span>
        <span className="h-px flex-1 bg-[#a9bbdf]" />
      </div>
      <table className="w-full table-fixed">
        <tbody>
          {items.map(([n, name, price]) => (
            <tr key={name} className="h-[18px]">
              <td className="w-[54px] pl-1.5">{n}</td>
              <td className="pl-1.5">{name}</td>
              <td className="w-[120px] pr-2.5 text-right">{price}</td>
            </tr>
          ))}
        </tbody>
      </table>
      <ColumnLines widths={["w-[55px]", "w-[169px]", "w-[115px]"]} />
      <svg className="pointer-events-none absolute top-3.5 -left-1" width="42" height="68" viewBox="0 0 42 68" fill="none" stroke="#ed1c24" strokeWidth="3" strokeLinejoin="round">
        <path d="M11 4c5-2 13-1 16 3 4 5 8 8 8 12v18l-1 15c-3 1-3 4-5 8-2 3-5 5-9 5-7 0-10-1-14-4-5-4-5-7-5-13l2-12V13c1-5 5-7 11-7" />
      </svg>
    </div>

    <div className="relative flex h-[37px] justify-between pt-1 pr-[3px]">
      <span>Total kostnad:</span>
      <span>421,45 SEK</span>
      <svg className="pointer-events-none absolute -top-3.5 -right-4" width="84" height="42" viewBox="0 0 84 42" fill="none" stroke="#ed1c24" strokeWidth="3" strokeLinejoin="round">
        <path d="M7 12C12 5 18 2 29 3l2 3c14 0 28 1 36 4 6 3 9 7 14 9v7c-2 6-4 9-10 10-15 3-25 4-41 4-10 0-21-1-24-5-6-7-4-16 1-23 3-4 7-5 9-6" />
      </svg>
    </div>
  </aside>
);

/* ---------- room finder ---------- */

const weeks = [
  [31, 1, 2, 3, 4, 5, 6],
  [7, 8, 9, 10, 11, 12, 13],
  [14, 15, 16, 17, 18, 19, 20],
  [21, 22, 23, 24, 25, 26, 27],
  [28, 29, 30, 1, 2, 3, 4],
  [5, 6, 7, 8, 9, 10, 11],
];

function dayClass(week: number, col: number) {
  if (week === 1 && col === 4) return "bg-[#ffd75e] text-black outline outline-[#2a8dd4] -outline-offset-1";
  const other = (week === 0 && col === 0) || (week === 4 && col > 2) || week === 5;
  const tone = other ? "text-[#a8a8a8]" : "text-[#222]";
  if (week < 2 || col > 4) return `bg-[#e1e1e1] ${tone}`;
  if (!other) return "bg-[#c1dbff] text-black";
  return tone;
}

const slots = [
  ["12:00 - 13:00", "2 konflikter: ", "Serviceen..."],
  ["15:30 - 16:30", "2 konflikter, inga rum", ""],
  ["16:00 - 17:00", "2 konflikter, inga rum", ""],
  ["12:30 - 13:30", "14 konflikter: ", "Samuels..."],
];

const Swatch = ({ color, label }: { color: string; label: string }) => (
  <span className="flex h-[17px] items-center gap-[3px] whitespace-nowrap"><i className={`h-4 w-[17px] border border-[#999] ${color}`} />{label}</span>
);

const ScrollArrow = ({ up }: { up?: boolean }) => (
  <svg width="8" height="6" viewBox="0 0 8 6" fill="none" stroke="#505050" strokeWidth="2"><path d={up ? "M.7 5 4 1.500 7.300 5" : "M.7 1 4 4.500 7.300 1"} /></svg>
);

const RoomFinder = () => (
  <aside className="flex w-[200px] shrink-0 flex-col bg-[#e6e6e6] pr-2 pb-[7px] pl-[7px] text-[11px] text-[#444]">
    <PaneHeading title="Hitta rum" className="mt-[15px] h-6 pr-[5px] pl-1.5" />
    <div className="mt-0.5 flex flex-1 flex-col bg-white px-2 pb-0.5">
      <div className="mt-3 flex h-4 items-center justify-center gap-[13px] pl-px text-black">
        <button aria-label="Föregående månad"><svg width="5" height="9" viewBox="0 0 5 9"><path d="M5 0v9L0 4.500z" /></svg></button>
        <span>september 2015</span>
        <button aria-label="Nästa månad"><svg width="5" height="9" viewBox="0 0 5 9"><path d="M0 0v9l5-4.500z" /></svg></button>
      </div>
      <table className="mt-1.5 ml-[11px] w-[147px] table-fixed text-center leading-[15px] text-black">
        <thead><tr>{["må", "ti", "on", "to", "fr", "lö", "sö"].map((d) => <th key={d} className="p-0 font-normal">{d}</th>)}</tr></thead>
        <tbody>
          {weeks.map((w, r) => (
            <tr key={r}>{w.map((d, c) => <td key={c} className={`p-0 ${dayClass(r, c)}`}>{d}</td>)}</tr>
          ))}
        </tbody>
      </table>
      <div className="mt-4 flex justify-between"><Swatch color="bg-white" label="Bra" /><Swatch color="bg-[#c1dbff]" label="Ganska bra" /></div>
      <div className="mt-[3px]"><Swatch color="bg-[#7aa7e5]" label="Mindre bra" /></div>
      <label htmlFor="roomlist" className="mt-[7px] leading-4">Visa en rumslista:</label>
      <div className="relative mt-0.5 h-[23px] border border-[#999] bg-white text-black">
        <select id="roomlist" className="h-full w-full appearance-none px-1 outline-none"><option>Anpassad</option></select>
        <span className="pointer-events-none absolute inset-y-0 right-1 flex items-center"><Chevron /></span>
      </div>
      <h3 className="mt-1 leading-4">Välj ett ledigt rum:</h3>
      <div className="mt-0.5 flex flex-1 flex-col border border-[#999] p-px text-black">
        <button className="h-[17px] pl-[3px] text-left">Inget</button>
        <button className="h-[17px] bg-[#e5f1fb] pl-[3px] text-left whitespace-nowrap">STH Nackasalen (58&gt;p) GH-1</button>
      </div>
      <h3 className="mt-[5px] leading-4">Föreslagna tider:</h3>
      <div className="mt-0.5 flex h-[172px] border border-[#999]">
        <ul className="min-w-0 flex-1">
          {slots.map(([time, text, who]) => (
            <li key={time} className="flex h-[41px] items-center border-b border-[#666] pl-[5px] leading-[13px]">
              <div className="min-w-0 flex-1 whitespace-nowrap text-[#777]"><b className="block text-black">{time}</b>{text}<span className="text-black">{who}</span></div>
              <span className="mr-2"><ConflictIcon /></span>
            </li>
          ))}
        </ul>
        <div className="flex w-4 flex-col items-center bg-[#f0f0f0] py-1.5">
          <ScrollArrow up />
          <span className="mt-[5px] h-[60px] w-[15px] bg-[#cdcdcd]" />
          <span className="flex-1" />
          <ScrollArrow />
        </div>
      </div>
    </div>
  </aside>
);

export default function App() {
  return (
    <div className="relative flex min-h-screen pt-7 pr-[106px] pb-[47px] pl-14 font-['Open_Sans',sans-serif]">
      <Wallpaper />
      <div className="relative flex min-w-0 flex-1 flex-col border border-[#0173c7] shadow-[0_2px_10px_rgba(0,0,0,0.6)]">
        <TitleBar />
        <Ribbon />
        <div className="flex flex-1">
          <InvitationForm />
          <ServicesPane />
          <RoomFinder />
        </div>
      </div>
    </div>
  );
}
